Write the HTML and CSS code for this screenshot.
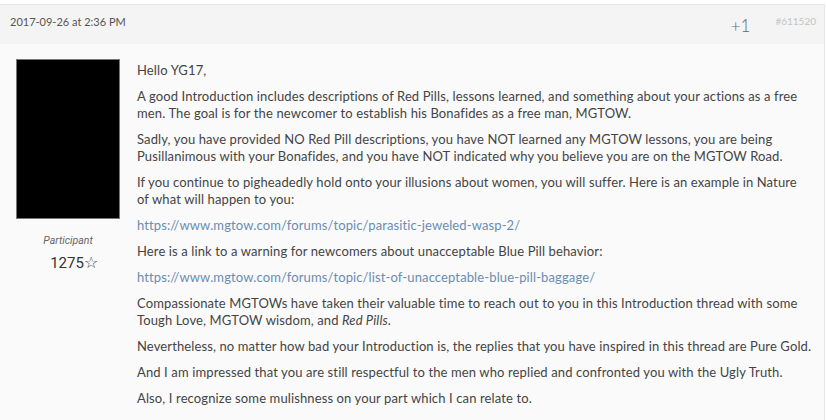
FILE: index.html
```html
<!DOCTYPE html>
<html>
<head>
<meta charset="utf-8">
<link rel="stylesheet" href="styles.css">
</head>
<body>
<div class="post">
  <div class="post-head">
    <span class="date">2017-09-26 at 2:36 PM</span>
    <div class="head-right">
      <span class="plus">+1</span>
      <span class="pid">#611520</span>
    </div>
  </div>
  <div class="post-body">
    <div class="author">
      <div class="avatar"></div>
      <div class="role">Participant</div>
      <div class="score">1275<span class="star">&#9734;</span></div>
    </div>
    <div class="content">
      <p>Hello YG17,</p>
      <p>A good Introduction includes descriptions of Red Pills, lessons learned, and something about your actions as a free<br>men. The goal is for the newcomer to establish his Bonafides as a free man, MGTOW.</p>
      <p>Sadly, you have provided NO Red Pill descriptions, you have NOT learned any MGTOW lessons, you are being<br>Pusillanimous with your Bonafides, and you have NOT indicated why you believe you are on the MGTOW Road.</p>
      <p>If you continue to pigheadedly hold onto your illusions about women, you will suffer. Here is an example in Nature<br>of what will happen to you:</p>
      <p><a href="#">https://www.mgtow.com/forums/topic/parasitic-jeweled-wasp-2/</a></p>
      <p>Here is a link to a warning for newcomers about unacceptable Blue Pill behavior:</p>
      <p><a href="#">https://www.mgtow.com/forums/topic/list-of-unacceptable-blue-pill-baggage/</a></p>
      <p>Compassionate MGTOWs have taken their valuable time to reach out to you in this Introduction thread with some<br>Tough Love, MGTOW wisdom, and <em>Red Pills</em>.</p>
      <p>Nevertheless, no matter how bad your Introduction is, the replies that you have inspired in this thread are Pure Gold.</p>
      <p>And I am impressed that you are still respectful to the men who replied and confronted you with the Ugly Truth.</p>
      <p>Also, I recognize some mulishness on your part which I can relate to.</p>
    </div>
  </div>
</div>
</body>
</html>
```

FILE: styles.css
```css
html, body {
  margin: 0;
  padding: 0;
  background: #ffffff;
}
body {
  padding-top: 4px;
  font-family: Lato, "Liberation Sans", sans-serif;
}
.post {
  width: 824px;
  border-right: 1px solid #e6e6e6;
}
.post-head {
  height: 40px;
  border-top: 1px solid #e4e4e4;
  background: #f4f4f4;
  display: flex;
  justify-content: space-between;
  align-items: flex-start;
  box-sizing: border-box;
}
.date {
  font-size: 11px;
  color: #555;
  margin: 10px 0 0 10px;
  line-height: 14px;
}
.head-right {
  display: flex;
  align-items: flex-start;
}
.plus {
  font-size: 17px;
  font-weight: 300;
  color: #666;
  margin-top: 11px;
  line-height: 20px;
}
.pid {
  font-size: 10px;
  color: #c4c4c4;
  margin: 9px 8px 0 25px;
  line-height: 14px;
}
.post-body {
  background: #fafafa;
  display: flex;
  height: 376px;
}
.author {
  width: 137px;
  flex: none;
  display: flex;
  flex-direction: column;
  align-items: center;
  padding-top: 15px;
  padding-right: 1px;
  box-sizing: border-box;
}
.avatar {
  width: 104px;
  height: 160px;
  background: #000;
  box-sizing: border-box;
  border: 1px solid #777;
}
.role {
  font-family: Roboto, sans-serif;
  font-style: italic;
  font-size: 10.5px;
  color: #666;
  margin-top: 15px;
  line-height: 14px;
}
.score {
  font-family: Roboto, sans-serif;
  font-size: 15px;
  color: #333;
  margin-top: 6px;
  padding-left: 12px;
  line-height: 18px;
}
.star {
  color: #444;
  font-size: 16px;
}
.content {
  width: 685px;
  padding-top: 18px;
  font-size: 13px;
  line-height: 17px;
  letter-spacing: 0.12px;
  color: #444;
}
.content p {
  margin: 0 0 9px 0;
  white-space: nowrap;
}
.content a {
  color: #6a8cb0;
  text-decoration: none;
}
```
